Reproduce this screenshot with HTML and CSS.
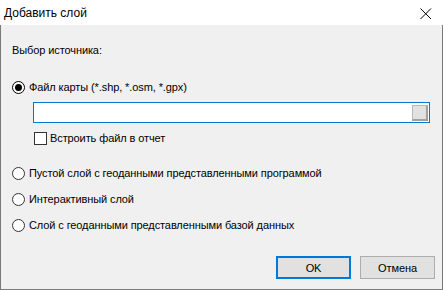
FILE: index.html
```html
<!DOCTYPE html>
<html lang="ru">
<head>
<meta charset="utf-8">
<link rel="stylesheet" href="styles.css">
</head>
<body>
<div class="window">
  <div class="titlebar">
    <span class="title">Добавить слой</span>
    <svg class="close" width="12" height="12" viewBox="0 0 12 12"><path d="M0.5 0.5 L11 11 M11 0.5 L0.5 11" stroke="#000" stroke-width="1" fill="none"/></svg>
  </div>
  <div class="content">
    <div class="section-label">Выбор источника:</div>
    <label class="option first">
      <span class="radio checked"><span class="dot"></span></span>
      <span>Файл карты (*.shp, *.osm, *.gpx)</span>
    </label>
    <div class="file-input">
      <span class="browse"></span>
    </div>
    <label class="check-row">
      <span class="checkbox"></span>
      <span>Встроить файл в отчет</span>
    </label>
    <label class="option second">
      <span class="radio"></span>
      <span>Пустой слой с геоданными представленными программой</span>
    </label>
    <label class="option">
      <span class="radio"></span>
      <span>Интерактивный слой</span>
    </label>
    <label class="option">
      <span class="radio"></span>
      <span>Слой с геоданными представленными базой данных</span>
    </label>
    <div class="buttons">
      <button class="btn default">OK</button>
      <button class="btn">Отмена</button>
    </div>
  </div>
</div>
</body>
</html>
```
FILE: styles.css
```css
html, body {
  margin: 0;
  padding: 0;
  background: #ffffff;
}
body {
  font-family: "Liberation Sans", Arial, sans-serif;
  font-size: 11px;
  letter-spacing: -0.1px;
  color: #000;
}
.window {
  width: 443px;
  height: 290px;
  display: flex;
  flex-direction: column;
}
.titlebar {
  height: 25px;
  background: #fff;
  display: flex;
  align-items: center;
  justify-content: space-between;
  padding: 0 11px 0 4px;
  box-sizing: border-box;
  flex: none;
}
.title {
  font-size: 12px;
  letter-spacing: 0;
  line-height: 16px;
  margin-top: 1px;
}
.close {
  display: block;
  margin-top: 2px;
}
.content {
  flex: 1;
  background: #f0f0f0;
  border: 1px solid #7a7a7a;
  border-top: none;
  display: flex;
  flex-direction: column;
  padding: 17px 12px 0 11px;
}
.section-label {
  line-height: 16px;
}
.option {
  display: flex;
  align-items: center;
  gap: 4px;
  line-height: 16px;
  margin-top: 10px;
}
.option.first { margin-top: 21px; }
.option.second { margin-top: 19px; }
.radio {
  width: 13px;
  height: 13px;
  box-sizing: border-box;
  border: 1px solid #333;
  border-radius: 50%;
  background: #fff;
  display: flex;
  align-items: center;
  justify-content: center;
  flex: none;
}
.radio.checked { border-color: #000; }
.dot {
  width: 7px;
  height: 7px;
  border-radius: 50%;
  background: #000;
}
.file-input {
  margin: 7px 0 0 21px;
  height: 21px;
  box-sizing: border-box;
  border: 1px solid #0078d7;
  background: #fff;
  display: flex;
  justify-content: flex-end;
  align-items: center;
  padding-right: 1px;
  width: 397px;
}
.browse {
  width: 16px;
  height: 16px;
  box-sizing: border-box;
  background: #e1e1e1;
  border: 1px solid #b9b9b9;
  border-right: 2px solid #a0a0a0;
  border-bottom: 2px solid #a0a0a0;
}
.check-row {
  display: flex;
  align-items: center;
  gap: 3px;
  margin: 7px 0 0 22px;
  line-height: 16px;
}
.checkbox {
  width: 13px;
  height: 13px;
  box-sizing: border-box;
  border: 1px solid #333;
  background: #fff;
  flex: none;
}
.buttons {
  display: flex;
  justify-content: flex-end;
  gap: 9px;
  margin-top: 23px;
  margin-right: -5px;
}
.btn {
  width: 75px;
  height: 23px;
  box-sizing: border-box;
  background: #e1e1e1;
  border: 1px solid #adadad;
  font-family: "Liberation Sans", Arial, sans-serif;
  font-size: 11px;
  letter-spacing: -0.1px;
  color: #000;
  padding: 0;
}
.btn.default {
  border: 2px solid #0078d7;
}
```
